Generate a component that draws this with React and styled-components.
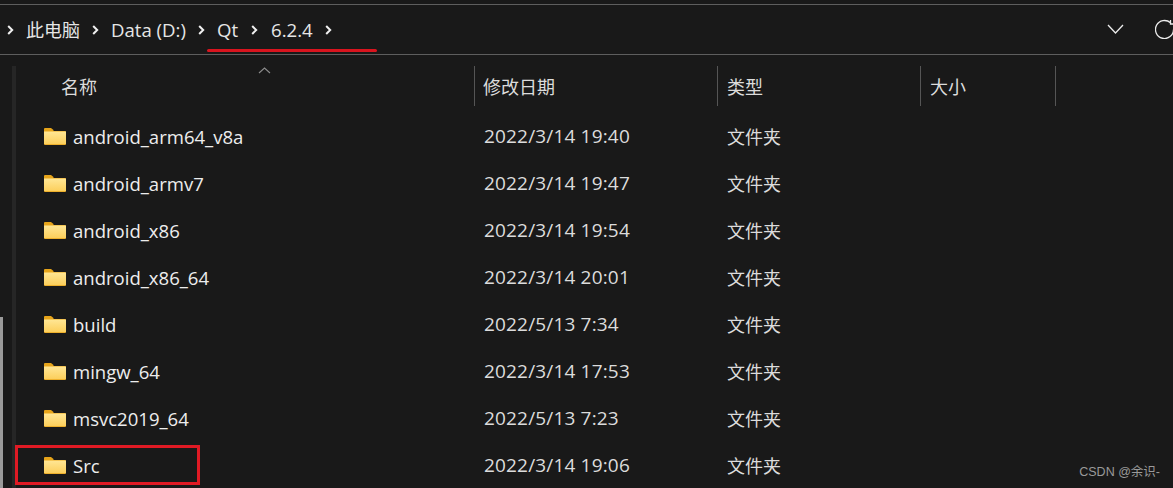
import React from "react";
import styled, { createGlobalStyle } from "styled-components";

const Global = createGlobalStyle`
  html, body { margin: 0; padding: 0; background: #191919; }
  #root { width: 1173px; height: 488px; overflow: hidden; }
`;

const FONT = `"Open Sans", "Noto Sans", "Noto Sans CJK SC", sans-serif`;

const Page = styled.div`
  position: relative;
  width: 1173px;
  height: 488px;
  background: #191919;
  color: #e8e8e8;
  font-family: ${FONT};
  font-size: 18px;
  overflow: hidden;
  display: flex;
  flex-direction: column;
`;

const AddressBar = styled.div`
  box-sizing: border-box;
  height: 52px;
  margin-top: 4px;
  border-top: 1px solid #5e5e5e;
  border-bottom: 1px solid #5e5e5e;
  display: flex;
  align-items: center;
  padding: 0 0 0 7px;
  position: relative;
`;

const Crumbs = styled.div`
  display: flex;
  align-items: center;
  flex: 1;
`;

const Crumb = styled.span`
  margin-left: ${(p) => p.$gap}px;
  line-height: 24px;
  color: #e6e6e6;
  white-space: nowrap;
  font-size: ${(p) => p.$size || 18.6}px;
`;

const Chev = styled.svg`
  margin-left: ${(p) => p.$gap}px;
  flex: none;
`;

const ChevronRight = ({ gap }) => (
  <Chev $gap={gap} width="7" height="10" viewBox="0 0 7 10">
    <path d="M1.2 1 L5.2 5 L1.2 9" fill="none" stroke="#f0f0f0" strokeWidth="2" />
  </Chev>
);

const ToolIcon = styled.svg`
  position: absolute;
  top: ${(p) => p.$top}px;
  left: ${(p) => p.$left}px;
`;

const RedLine = styled.div`
  position: absolute;
  left: 207px;
  top: 44px;
  width: 170px;
  height: 3px;
  background: #d9141e;
  border-radius: 2px;
`;

const Body = styled.div`
  flex: 1;
  position: relative;
  padding: 11px 0 0 0;
`;

const LeftTrack = styled.div`
  position: absolute;
  left: 12px;
  top: 11px;
  bottom: 0;
  width: 4px;
  background: #262626;
`;

const LeftThumb = styled.div`
  position: absolute;
  left: 0;
  top: 262px;
  bottom: 0;
  width: 3px;
  background: #9a9a9a;
`;

const HeaderRow = styled.div`
  display: grid;
  grid-template-columns: 475px 243px 203px 135px;
  height: 40px;
`;

const HeaderCell = styled.div`
  box-sizing: border-box;
  height: 40px;
  padding-left: ${(p) => p.$pad}px;
  padding-bottom: 1px;
  border-right: 1px solid #555;
  display: flex;
  align-items: center;
  font-size: 18px;
  color: #dcdcdc;
`;

const SortArrow = styled.svg`
  position: absolute;
  left: 258px;
  top: 12px;
`;

const Rows = styled.div`
  margin-top: 6px;
  display: flex;
  flex-direction: column;
`;

const Row = styled.div`
  display: grid;
  grid-template-columns: 475px 243px 1fr;
  height: 47px;
  align-items: center;
`;

const NameCell = styled.div`
  display: flex;
  align-items: center;
  padding-left: 44px;
  gap: 7px;
  color: #ededed;
  font-size: 18.55px;
`;

const NameText = styled.span`
  padding-top: 2px;
`;

const DateCell = styled.div`
  padding-left: 9px;
  color: #dcdcdc;
  font-size: 19px;
  letter-spacing: 0.17px;
`;

const TypeCell = styled.div`
  padding-left: 9px;
  color: #dcdcdc;
`;

const RedBox = styled.div`
  position: absolute;
  left: 15px;
  top: 445px;
  width: 185px;
  height: 40px;
  box-sizing: border-box;
  border: 3px solid #e01a24;
`;

const Watermark = styled.div`
  position: absolute;
  right: 13px;
  bottom: 8px;
  font-family: "Liberation Sans", "Noto Sans CJK SC", sans-serif;
  font-size: 12.5px;
  color: #9a9a9a;
`;

const FolderIcon = styled.svg`
  flex: none;
`;

const Folder = () => (
  <FolderIcon width="22" height="18" viewBox="0 0 22 18">
    <defs>
      <linearGradient id="fg" x1="0" y1="0" x2="0" y2="1">
        <stop offset="0" stopColor="#ffe694" />
        <stop offset="1" stopColor="#fccf5c" />
      </linearGradient>
    </defs>
    <path d="M0 2 Q0 1 1 1 H7 L9.5 3 V5 H0 Z" fill="#e6a41a" />
    <path d="M0 4 H21 Q22 4 22 5 V17 Q22 18 21 18 H1 Q0 18 0 17 Z" fill="#eeb02c" />
    <rect x="0" y="4.6" width="22" height="12.4" fill="url(#fg)" />
  </FolderIcon>
);

const items = [
  ["android_arm64_v8a", "2022/3/14 19:40"],
  ["android_armv7", "2022/3/14 19:47"],
  ["android_x86", "2022/3/14 19:54"],
  ["android_x86_64", "2022/3/14 20:01"],
  ["build", "2022/5/13 7:34"],
  ["mingw_64", "2022/3/14 17:53"],
  ["msvc2019_64", "2022/5/13 7:23"],
  ["Src", "2022/3/14 19:06"],
];

export default function App() {
  return (
    <Page>
      <Global />
      <AddressBar>
        <Crumbs>
          <ChevronRight gap={0} />
          <Crumb $gap={12} $size={18}>此电脑</Crumb>
          <ChevronRight gap={12} />
          <Crumb $gap={12}>Data (D:)</Crumb>
          <ChevronRight gap={12} />
          <Crumb $gap={12}>Qt</Crumb>
          <ChevronRight gap={13} />
          <Crumb $gap={13}>6.2.4</Crumb>
          <ChevronRight gap={12} />
        </Crumbs>
        <ToolIcon $left={1107} $top={19} width="17" height="11" viewBox="0 0 17 11">
          <path d="M1 1 L8.5 9 L16 1" fill="none" stroke="#ececec" strokeWidth="1.3" />
        </ToolIcon>
        <ToolIcon $left={1155} $top={14} width="18" height="20" viewBox="0 0 18 20">
          <path d="M15.5 3.8 A9 9 0 1 0 18.5 10.5" fill="none" stroke="#ececec" strokeWidth="1.3" />
          <path d="M15.5 1 V5 H20" fill="none" stroke="#ececec" strokeWidth="1.3" />
        </ToolIcon>
        <RedLine />
      </AddressBar>
      <Body>
        <LeftTrack />
        <LeftThumb />
        <SortArrow width="13" height="7" viewBox="0 0 13 7">
          <path d="M1 6 L6.5 1 L12 6" fill="none" stroke="#8c8c8c" strokeWidth="1.1" />
        </SortArrow>
        <HeaderRow>
          <HeaderCell $pad={61}>名称</HeaderCell>
          <HeaderCell $pad={8}>修改日期</HeaderCell>
          <HeaderCell $pad={9}>类型</HeaderCell>
          <HeaderCell $pad={9}>大小</HeaderCell>
        </HeaderRow>
        <Rows>
          {items.map(([name, date]) => (
            <Row key={name}>
              <NameCell>
                <Folder />
                <NameText>{name}</NameText>
              </NameCell>
              <DateCell>{date}</DateCell>
              <TypeCell>文件夹</TypeCell>
            </Row>
          ))}
        </Rows>
      </Body>
      <RedBox />
      <Watermark>CSDN @余识-</Watermark>
    </Page>
  );
}
